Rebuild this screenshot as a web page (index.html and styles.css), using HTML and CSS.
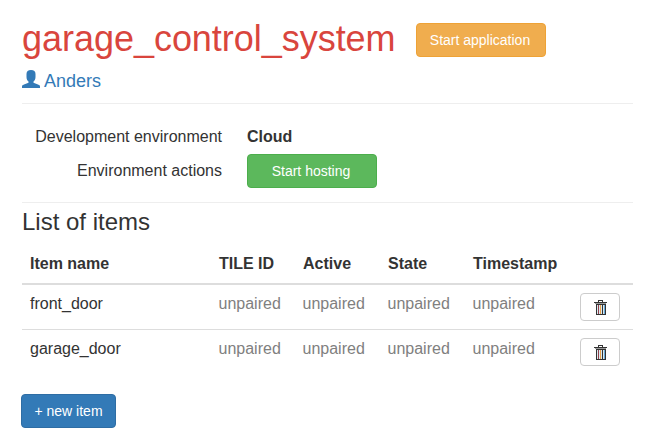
FILE: index.html
```html
<!DOCTYPE html>
<html lang="en">
<head>
<meta charset="utf-8">
<title>garage_control_system</title>
<link rel="stylesheet" href="styles.css">
</head>
<body>
<main class="page">
  <header class="head">
    <h1>garage_control_system</h1>
    <button class="btn warning">Start application</button>
  </header>
  <a class="owner"><svg class="user" viewBox="0 0 18 18"><path d="M9 0C6 0 4.500 1.500 4.500 4v3c0 2 .8 3.500 2 4.500v1.200L2 14.500C.6 15 0 15.500 0 16.500V18h18v-1.500c0-1-.6-1.500-2-2l-4.500-1.800v-1.200c1.200-1 2-2.500 2-4.500V4C13.500 1.500 12 0 9 0z"/></svg><span>Anders</span></a>
  <section class="env">
    <div class="label">Development environment</div><div class="value">Cloud</div>
    <div class="label">Environment actions</div><button class="btn success">Start hosting</button>
  </section>
  <h2>List of items</h2>
  <table>
    <thead><tr><th class="c1">Item name</th><th class="c2">TILE ID</th><th class="c3">Active</th><th class="c4">State</th><th class="c5">Timestamp</th><th></th></tr></thead>
    <tbody>
      <tr><td>front_door</td><td class="muted">unpaired</td><td class="muted">unpaired</td><td class="muted">unpaired</td><td class="muted">unpaired</td><td class="action"><button class="trash" aria-label="Delete"><svg viewBox="0 0 13 15"><path class="handle" d="M4.500 2V.5h4V2"/><path class="lid" d="M0 2h13v1H0zM2 4h10v11H2z"/><path class="rim" d="M1 3h11v1H1z"/><path class="red" d="M4 5h1v9H4z"/><path class="gold" d="M6 5h1v9H6z"/><path class="blue" d="M10 5h1v9h-1z"/><path class="pale" d="M3 5h1v9H3zM5 5h1v9H5zM7 5h1v9H7zM9 5h1v9H9z"/></svg></button></td></tr>
      <tr><td>garage_door</td><td class="muted">unpaired</td><td class="muted">unpaired</td><td class="muted">unpaired</td><td class="muted">unpaired</td><td class="action"><button class="trash" aria-label="Delete"><svg viewBox="0 0 13 15"><path class="handle" d="M4.500 2V.5h4V2"/><path class="lid" d="M0 2h13v1H0zM2 4h10v11H2z"/><path class="rim" d="M1 3h11v1H1z"/><path class="red" d="M4 5h1v9H4z"/><path class="gold" d="M6 5h1v9H6z"/><path class="blue" d="M10 5h1v9h-1z"/><path class="pale" d="M3 5h1v9H3zM5 5h1v9H5zM7 5h1v9H7zM9 5h1v9H9z"/></svg></button></td></tr>
    </tbody>
  </table>
  <button class="btn primary">+ new item</button>
</main>
</body>
</html>
```
FILE: styles.css
```css
* { box-sizing: border-box; }
body { margin: 0; background: #fff; color: #333; font: 16px/23px "Liberation Sans", Arial, sans-serif; }
.page { width: 611px; margin-left: 22px; padding-top: 19px; }
.head { display: flex; height: 42px; }
h1 { margin: 0; width: 394px; font-size: 36px; line-height: 40px; font-weight: 400; letter-spacing: -.03px; color: #d9453d; white-space: nowrap; }
.btn { font: 14px/20px "Liberation Sans", Arial, sans-serif; color: #fff; border: 1px solid; border-radius: 4px; padding: 0 2px 0 0; height: 34px; width: 130px; }
.warning { background: #f0ad4e; border-color: #eea236; margin-top: 4px; }
.success { background: #5cb85c; border-color: #4cae4c; }
.primary { display: block; background: #337ab7; border-color: #2e6da4; width: 95px; margin: 19px 0 0 -1px; padding: 0; }
.owner { display: flex; height: 43px; padding-top: 8px; gap: 4px; color: #337ab7; font-size: 18px; line-height: 24px; border-bottom: 1px solid #eee; }
.user { width: 18px; height: 18px; margin-top: 1px; fill: currentColor; }
.env { display: grid; grid-template-columns: 200px 130px; grid-template-rows: 25px 34px; column-gap: 25px; row-gap: 4px; height: 99px; padding-top: 21px; border-bottom: 1px solid #eee; }
.label { text-align: right; }
.env .label:nth-of-type(3) { padding-top: 5px; }
.value { font-weight: 700; }
h2 { margin: 0; height: 42px; padding-top: 5px; font-size: 24px; line-height: 28px; font-weight: 400; }
table { width: 611px; border-collapse: separate; border-spacing: 0; table-layout: fixed; }
th, td { padding: 7px 0 0 8px; text-align: left; vertical-align: top; }
th { height: 40px; border-bottom: 2px solid #ddd; }
td { height: 45px; border-bottom: 1px solid #ddd; }
tr:last-child td { border-bottom: 0; }
.c1 { width: 189px; } .c2 { width: 84px; } .c3 { width: 85px; } .c4 { width: 85px; } .c5 { width: 107px; }
.muted { color: #808080; padding-left: 7.500px; }
.action { padding-top: 8px; }
.trash { display: flex; align-items: flex-start; justify-content: flex-start; width: 40px; height: 28px; padding: 6px 0 0 13px; border: 1px solid #ccc; border-radius: 4px; background: #fff; }
.trash svg { width: 13px; height: 15px; shape-rendering: crispEdges; }
.handle { fill: none; stroke: #333; }
.lid { fill: #333; }
.rim { fill: #999; }
.red { fill: #93404b; }
.gold { fill: #e9a24b; }
.blue { fill: #6aaad8; }
.pale { fill: #dceaf0; }
```
